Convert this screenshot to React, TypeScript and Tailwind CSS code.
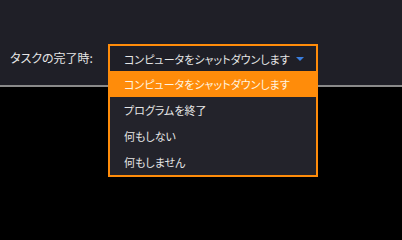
import React from "react";

const options = [
  "コンピュータをシャットダウンします",
  "プログラムを終了",
  "何もしない",
  "何もしません",
];

const App: React.FC = () => {
  const [selected] = React.useState(0);

  return (
    <div className="w-full min-h-screen bg-black overflow-hidden font-['Noto_Sans_CJK_JP',sans-serif] text-[11px] text-[#e6e6e6] [font-feature-settings:'palt']">
      <div className="h-[85px] bg-[#1f1f27] flex items-start pt-[44px]">
        <div className="w-[108px] h-[28px] flex items-center pl-[10px] text-[12px] leading-none">
          タスクの完了時:
        </div>
        <div className="relative w-[210px]">
          <div className="h-[28px] border-2 border-b-0 border-[#ff8c0a] bg-[#1f1f27] flex items-center pl-[14px] pr-[10px]">
            <span className="flex-1 leading-none whitespace-nowrap">{options[selected]}</span>
            <svg width="10" height="6" viewBox="0 0 10 6" className="mr-[1px] shrink-0">
              <path d="M1 1h8L5 5z" fill="#3a7ee0" />
            </svg>
          </div>
          <ul className="absolute left-0 top-[27px] w-[210px] border-2 border-t-0 border-[#ff8c0a] bg-[#23232b] z-10">
            {options.map((o, i) => (
              <li
                key={o}
                className={
                  i === selected
                    ? "h-[26px] flex items-center pl-[14px] bg-[#ff8c0a] text-[#fff4e0]"
                    : "h-[26px] flex items-center pl-[14px]"
                }
              >
                {o}
              </li>
            ))}
          </ul>
        </div>
      </div>
      <div className="h-[2px] bg-[#8a8a8a]" />
    </div>
  );
};

export default App;
